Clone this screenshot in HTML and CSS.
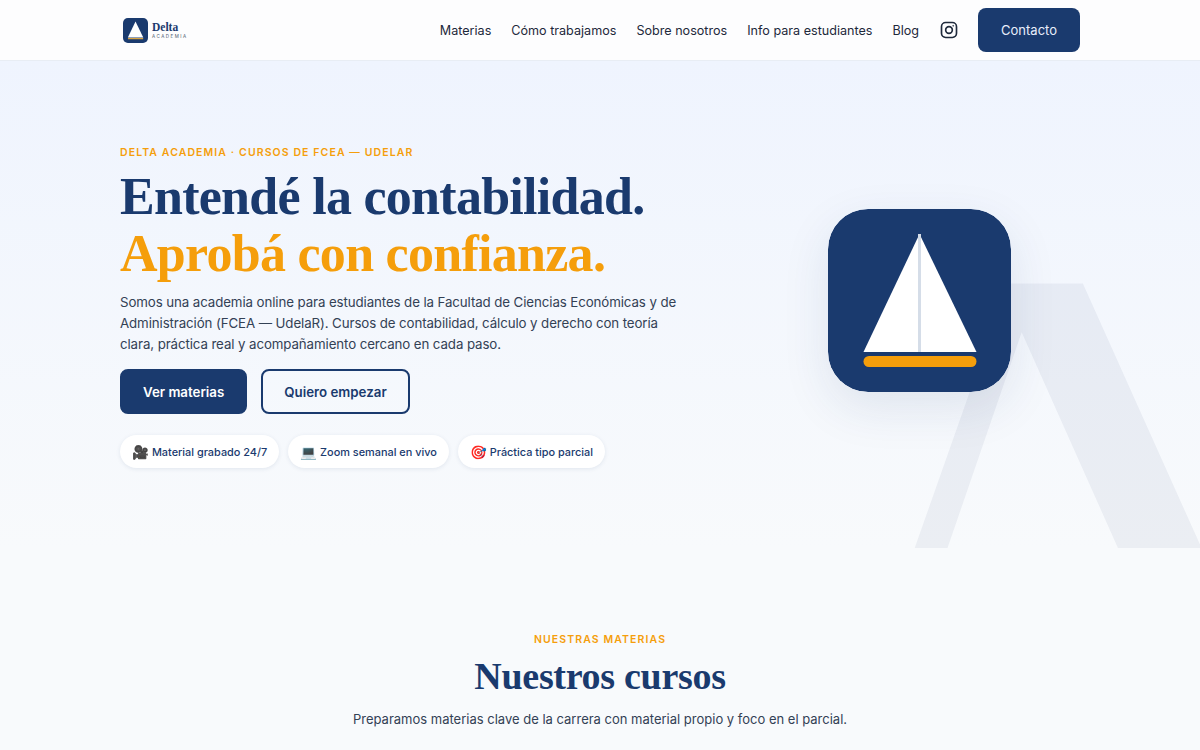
FILE: index.html
```html
<!DOCTYPE html>
<html lang="es">

<head>
	<meta charset="UTF-8">
	<meta name="viewport" content="width=device-width, initial-scale=1.0">
	<title>Delta Academia</title>
	<link rel="stylesheet" href="styles.css">
</head>

<body>
	<header class="navbar">
		<a href="#" class="brand">
			<svg class="brand-icon" viewBox="0 0 183 183" aria-hidden="true">
				<rect width="183" height="183" rx="36" fill="#1a3a6e"/>
				<polygon points="91.5,25 148.5,143 35.5,143" fill="#fff"/>
				<rect x="35.5" y="147" width="113" height="8" rx="4" fill="#d9a441"/>
			</svg>
			<span class="brand-text">
				<span class="brand-name">Delta</span>
				<span class="brand-sub">ACADEMIA</span>
			</span>
		</a>
		<nav class="nav-links">
			<a href="#">Materias</a>
			<a href="#">Cómo trabajamos</a>
			<a href="#">Sobre nosotros</a>
			<a href="#">Info para estudiantes</a>
			<a href="#">Blog</a>
			<a href="#" class="nav-icon" aria-label="Instagram">
				<svg viewBox="0 0 24 24" width="20" height="20" fill="none" stroke="#1e293b" stroke-width="2">
					<rect x="3" y="3" width="18" height="18" rx="5"/>
					<circle cx="12" cy="12" r="4"/>
					<circle cx="17" cy="7" r="0.5" fill="#1e293b" stroke-width="1"/>
				</svg>
			</a>
			<a href="#" class="nav-cta">Contacto</a>
		</nav>
	</header>

	<section class="hero">
		<div class="hero-bg-letter" aria-hidden="true">Δ</div>
		<div class="hero-text">
			<p class="eyebrow">DELTA ACADEMIA · CURSOS DE FCEA — UDELAR</p>
			<h1>Entendé la contabilidad.<br><span class="accent">Aprobá con confianza.</span></h1>
			<p class="hero-desc">Somos una academia online para estudiantes de la Facultad de Ciencias Económicas y de Administración (FCEA — UdelaR). Cursos de contabilidad, cálculo y derecho con teoría clara, práctica real y acompañamiento cercano en cada paso.</p>
			<div class="hero-buttons">
				<a href="#" class="btn btn-primary">Ver materias</a>
				<a href="#" class="btn btn-outline">Quiero empezar</a>
			</div>
			<div class="pills">
				<span class="pill"><span class="pill-emoji">🎥</span> Material grabado 24/7</span>
				<span class="pill"><span class="pill-emoji">💻</span> Zoom semanal en vivo</span>
				<span class="pill"><span class="pill-emoji">🎯</span> Práctica tipo parcial</span>
			</div>
		</div>
		<div class="hero-logo">
			<svg viewBox="0 0 183 183" width="183" height="183" aria-hidden="true">
				<rect width="183" height="183" rx="40" fill="#1a3a6e"/>
				<polygon points="91.5,25 148.5,143 35.5,143" fill="#fff"/>
				<rect x="90" y="25" width="3" height="118" fill="#d5dde8"/>
				<rect x="35.5" y="147" width="113" height="11" rx="5.5" fill="#f59e0b"/>
			</svg>
		</div>
	</section>

	<section class="courses">
		<p class="eyebrow">NUESTRAS MATERIAS</p>
		<h2>Nuestros cursos</h2>
		<p class="courses-desc">Preparamos materias clave de la carrera con material propio y foco en el parcial.</p>
	</section>
</body>

</html>
```

FILE: styles.css
```css
body {
	font-family: 'Inter', 'Noto Sans', sans-serif;
	margin: 0;
	background: #f8fafc;
	color: #1e293b;
}

a {
	text-decoration: none;
	color: inherit;
}

.navbar {
	display: flex;
	justify-content: space-between;
	align-items: center;
	height: 60px;
	padding: 0 120px;
	background: #fdfdfe;
	border-bottom: 1px solid #e8edf4;
}

.brand {
	display: flex;
	align-items: center;
	gap: 4px;
	margin-left: 3px;
}

.brand-icon {
	width: 25px;
	height: 25px;
}

.brand-text {
	display: flex;
	flex-direction: column;
}

.brand-name {
	font-family: 'Liberation Serif', serif;
	font-weight: 700;
	font-size: 11.5px;
	line-height: 12px;
	color: #1a3a6e;
}

.brand-sub {
	font-size: 4.5px;
	line-height: 7px;
	letter-spacing: 1.5px;
	color: #475569;
}

.nav-links {
	display: flex;
	align-items: center;
	gap: 20px;
	font-size: 12.6px;
}

.nav-icon {
	display: flex;
	margin-right: -1px;
}

.nav-cta {
	display: flex;
	align-items: center;
	height: 44px;
	padding: 0 23px;
	font-size: 13px;
	background: #1a3a6e;
	color: #e8eefb;
	border-radius: 8px;
}

.hero {
	position: relative;
	overflow: hidden;
	display: grid;
	grid-template-columns: 580px 1fr;
	gap: 59px;
	align-items: center;
	padding: 85px 120px 80px;
	background: linear-gradient(180deg, #eff4fe, #f8fafc);
}

.hero-bg-letter {
	position: absolute;
	right: -8px;
	top: 136px;
	font-family: 'Liberation Serif', serif;
	font-weight: 700;
	font-size: 490px;
	line-height: 1;
	color: rgba(26, 58, 110, 0.06);
	transform: scaleX(1.08) skewX(2.3deg);
}

.hero-text {
	position: relative;
}

.eyebrow {
	margin: 0;
	font-size: 10.5px;
	font-weight: 600;
	line-height: 13px;
	letter-spacing: 1.1px;
	color: #f59e0b;
}

.hero h1 {
	margin: 9px 0 10px;
	font-family: 'Liberation Serif', serif;
	font-size: 52px;
	font-weight: 700;
	line-height: 57px;
	letter-spacing: -0.72px;
	color: #1a3a6e;
}

.accent {
	color: #f59e0b;
}

.hero-desc {
	max-width: 565px;
	margin: 0 0 14px;
	font-size: 13.3px;
	line-height: 21px;
	letter-spacing: -0.1px;
	color: #334155;
}

.hero-buttons {
	display: flex;
	gap: 14px;
	margin-bottom: 21px;
}

.btn {
	display: flex;
	align-items: center;
	box-sizing: border-box;
	height: 45px;
	padding: 0 21px;
	font-size: 13.3px;
	font-weight: 600;
	border-radius: 8px;
	border: 2px solid #1a3a6e;
}

.btn-primary {
	background: #1a3a6e;
	color: #fff;
}

.btn-outline {
	background: transparent;
	color: #1a3a6e;
}

.pills {
	display: flex;
	gap: 9px;
}

.pill {
	display: flex;
	align-items: center;
	height: 33px;
	padding: 0 12px;
	background: #fff;
	border-radius: 999px;
	box-shadow: 0 1px 4px rgba(26, 58, 110, 0.1);
	font-size: 10.9px;
	font-weight: 500;
	color: #1a3a6e;
	white-space: pre;
}

.pill-emoji {
	font-size: 13.5px;
}

.hero-logo {
	position: relative;
	display: flex;
	justify-content: center;
	margin-bottom: 14px;
}

.hero-logo svg {
	border-radius: 40px;
	box-shadow: 0 16px 48px rgba(26, 58, 110, 0.1);
}

.courses {
	padding: 85px 120px 0;
	text-align: center;
}

.courses h2 {
	margin: 7px 0 10px;
	font-family: 'Liberation Serif', serif;
	font-size: 38px;
	font-weight: 700;
	line-height: 46px;
	letter-spacing: -0.3px;
	color: #1a3a6e;
}

.courses-desc {
	margin: 0;
	font-size: 13px;
	line-height: 21px;
	color: #334155;
}
```
